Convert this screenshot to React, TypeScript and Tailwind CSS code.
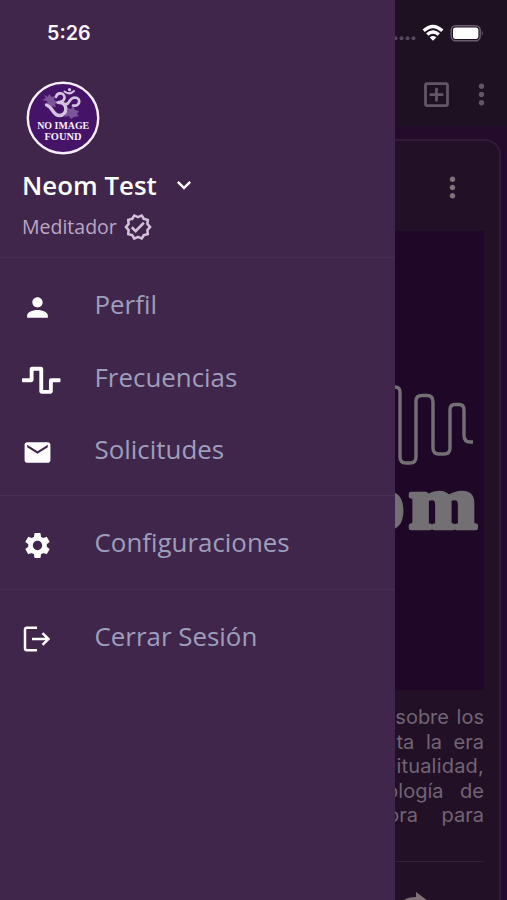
import type { ReactNode } from "react";
import {
  MdEmail,
  MdKeyboardArrowDown,
  MdMoreVert,
  MdOutlineAddBox,
  MdOutlineVerified,
  MdPerson,
  MdSettings,
} from "react-icons/md";
import { FaWaveSquare } from "react-icons/fa";

const LogoutIcon = () => (
  <svg
    width="28"
    height="28"
    viewBox="0 0 28 28"
    fill="none"
    stroke="currentColor"
    strokeWidth="2.5"
  >
    <path d="M15 2.8H5Q3 2.8 3 4.8V23.2Q3 25.2 5 25.2H15" />
    <path d="M10 14H27M20.5 8.2L26.5 14L20.5 19.8" />
  </svg>
);

const Avatar = () => (
  <svg className="shrink-0" width="74" height="74" viewBox="0 0 74 74">
    <circle cx="37" cy="37" r="35.2" fill="#451468" stroke="#f6effa" strokeWidth="2.4" />
    <g fill="#7c5499">
      <path d="M18 14l4 2 1-3 3 3 3-1-1 4 4 2-3 2 1 3-5-1-3-1-1-4-5-1 4-2z" />
      <path d="M41 27l4 1 2-3 2 4 4 1-2 3 2 2-5 1-3 2-2-3-5 1 2-3-2-2 4-1z" />
    </g>
    <g fill="none" stroke="#d5c3e0" strokeLinecap="round">
      <path strokeWidth="2.6" d="M30 16C31 10.5 39 11.5 38.5 17Q38 21 31.5 21.5" />
      <path strokeWidth="3.4" d="M33 21.5C42 21 42 34.5 33.5 34.5C26.5 34.5 27.5 26.5 20.5 24" />
      <path strokeWidth="2.7" d="M39 23C44 25 42 17 48.500 16.500C55.500 16.500 54.500 26 47 24.500" />
      <path strokeWidth="2" d="M38.5 10.5Q43.5 14.5 48 10" />
    </g>
    <circle cx="43.5" cy="8.7" r="1.6" fill="#d5c3e0" />
    <g
      fill="#f6effa"
      fontFamily="'Liberation Serif', serif"
      fontSize="11"
      fontWeight="700"
      textAnchor="middle"
    >
      <text x="37.2" y="48" textLength="52" lengthAdjust="spacingAndGlyphs">
        NO IMAGE
      </text>
      <text x="37" y="59" textLength="37" lengthAdjust="spacingAndGlyphs">
        FOUND
      </text>
    </g>
  </svg>
);

const MenuItem = ({ icon, label }: { icon: ReactNode; label: string }) => (
  <li className="flex h-[72.7px] items-center pl-[22px] text-white">
    <span className="flex w-[72.5px] shrink-0 items-center pt-1.5">{icon}</span>
    <span className="text-[25.9px] text-[#9d9ebc]">{label}</span>
  </li>
);

const StatusIcons = () => (
  <svg className="shrink-0" width="112" height="64" viewBox="0 0 112 64">
    <g fill="#57475c">
      <circle cx="0.5" cy="38.2" r="2" />
      <circle cx="6.5" cy="38.2" r="2" />
      <circle cx="12.5" cy="38.2" r="2" />
      <circle cx="18.5" cy="38.2" r="2" />
    </g>
    <g fill="none" stroke="#fff" strokeWidth="3.3">
      <path d="M28.7 30.8Q38 22.2 47.3 30.8" />
      <path d="M32.2 34.6Q38 29.4 43.8 34.6" />
    </g>
    <path d="M34.7 37.4Q38 34.6 41.3 37.4L38 40.8Z" fill="#fff" />
    <rect x="56.2" y="25.7" width="29" height="15" rx="4.4" fill="none" stroke="#6b5c70" strokeWidth="1.5" />
    <rect x="58" y="27.5" width="25.4" height="11.4" rx="2.6" fill="#fff" />
    <path d="M86.8 30.6Q89 33.2 86.8 35.8Z" fill="#6b5c70" />
  </svg>
);

const PostImage = () => (
  <svg className="shrink-0" width="89" height="459" viewBox="0 0 89 459">
    <rect width="89" height="459" fill="#1f0727" />
    <path
      d="M0 156Q5 156 5 161V226Q5 232 11 232H15Q21 232 21 226V170Q21 164.5 27 164.5H32Q38 164.5 38 171V217Q38 223 44 223H49Q55 223 55 217V179Q55 173.5 60 173.5H64Q69 173.5 69 179V204Q69 211 75 211H78"
      fill="none"
      stroke="#737074"
      strokeWidth="3.4"
    />
    <g
      fill="#737074"
      stroke="#737074"
      strokeWidth="4.4"
      strokeLinejoin="round"
      fontFamily="'Liberation Serif', serif"
      fontSize="73"
      fontWeight="700"
    >
      <text x="-27.5" y="297">
        o
      </text>
      <text x="14" y="297" textLength="68" lengthAdjust="spacingAndGlyphs">
        m
      </text>
    </g>
  </svg>
);

const excerpt = ["sobre los", "nta la era", "itualidad,", "ología de", "ora para"];
const wordGap = [
  "[word-spacing:2px]",
  "[word-spacing:6px]",
  "tracking-[0.2px]",
  "[word-spacing:11px]",
  "[word-spacing:18px]",
];

const Drawer = () => (
  <aside className="flex w-[395px] shrink-0 flex-col bg-[#41264b] font-['Open_Sans',sans-serif]">
    <div className="h-[81px] pl-[47px] pt-[20px] font-['Inter',sans-serif] text-[19.7px] font-semibold leading-[26px] text-[#fbf4fc]">
      5:26
    </div>
    <header className="flex h-[177px] flex-col border-b border-[#4a2e54] pl-[22px]">
      <div className="pl-1">
        <Avatar />
      </div>
      <div className="mt-[12px] flex h-9 items-center gap-[13px] text-white">
        <span className="text-[25.9px] font-semibold">Neom Test</span>
        <MdKeyboardArrowDown size={28} />
      </div>
      <div className="mt-[9px] flex h-[30px] items-center gap-[6px] text-[#bba6c3]">
        <span className="text-[19.5px]">Meditador</span>
        <MdOutlineVerified size={30} className="text-[#d4c2dc]" />
      </div>
    </header>
    <nav>
      <ul className="h-[238px] border-b border-[#4a2e54] pt-[10px]">
        <MenuItem icon={<MdPerson size={31} />} label="Perfil" />
        <MenuItem icon={<FaWaveSquare size={38.5} />} label="Frecuencias" />
        <MenuItem icon={<MdEmail size={31} />} label="Solicitudes" />
      </ul>
      <ul className="h-[93.5px] border-b border-[#4a2e54] pt-[10.5px]">
        <MenuItem icon={<MdSettings size={31} />} label="Configuraciones" />
      </ul>
      <ul className="pt-[10.5px]">
        <MenuItem icon={<LogoutIcon />} label="Cerrar Sesión" />
      </ul>
    </nav>
  </aside>
);

const Feed = () => (
  <main className="flex w-[112px] shrink-0 flex-col overflow-hidden bg-[#240b2b] font-['Inter',sans-serif]">
    <div className="h-[126px] shrink-0 bg-[#1e1121] text-[#655568]">
      <StatusIcons />
      <div className="flex h-[61px] items-center">
        <MdOutlineAddBox size={33} className="ml-[25px] shrink-0" />
        <MdMoreVert size={33} className="ml-[12px] shrink-0" />
      </div>
    </div>
    <article className="mt-[13px] flex h-[780px] w-[106px] shrink-0 flex-col rounded-tr-[16px] border-r-2 border-t-2 border-[#311b38] bg-[#221126]">
      <div className="flex h-[90px] shrink-0 items-center pl-[41px] pt-[3px] text-[#817077]">
        <MdMoreVert size={33} />
      </div>
      <PostImage />
      <div className="mt-[15px] w-[89px] shrink-0 text-[20px] leading-[24.6px] text-[#716474]">
        {excerpt.map((line, i) => (
          <p key={line} className={`flex justify-end whitespace-nowrap ${wordGap[i]}`}>
            {line}
          </p>
        ))}
      </div>
      <div className="mt-[33px] h-px w-[89px] shrink-0 bg-[#32203a]" />
      <svg className="mt-[30px] shrink-0" width="60" height="24" viewBox="0 0 60 24">
        <path d="M8 9Q12 5 21 5V0L33 9L21 18V12Q13 11 6 16Z" fill="#817077" />
      </svg>
    </article>
  </main>
);

const App = () => {
  return (
    <div className="flex h-[900px] w-[507px] overflow-hidden">
      <Drawer />
      <Feed />
    </div>
  );
};

export default App;
